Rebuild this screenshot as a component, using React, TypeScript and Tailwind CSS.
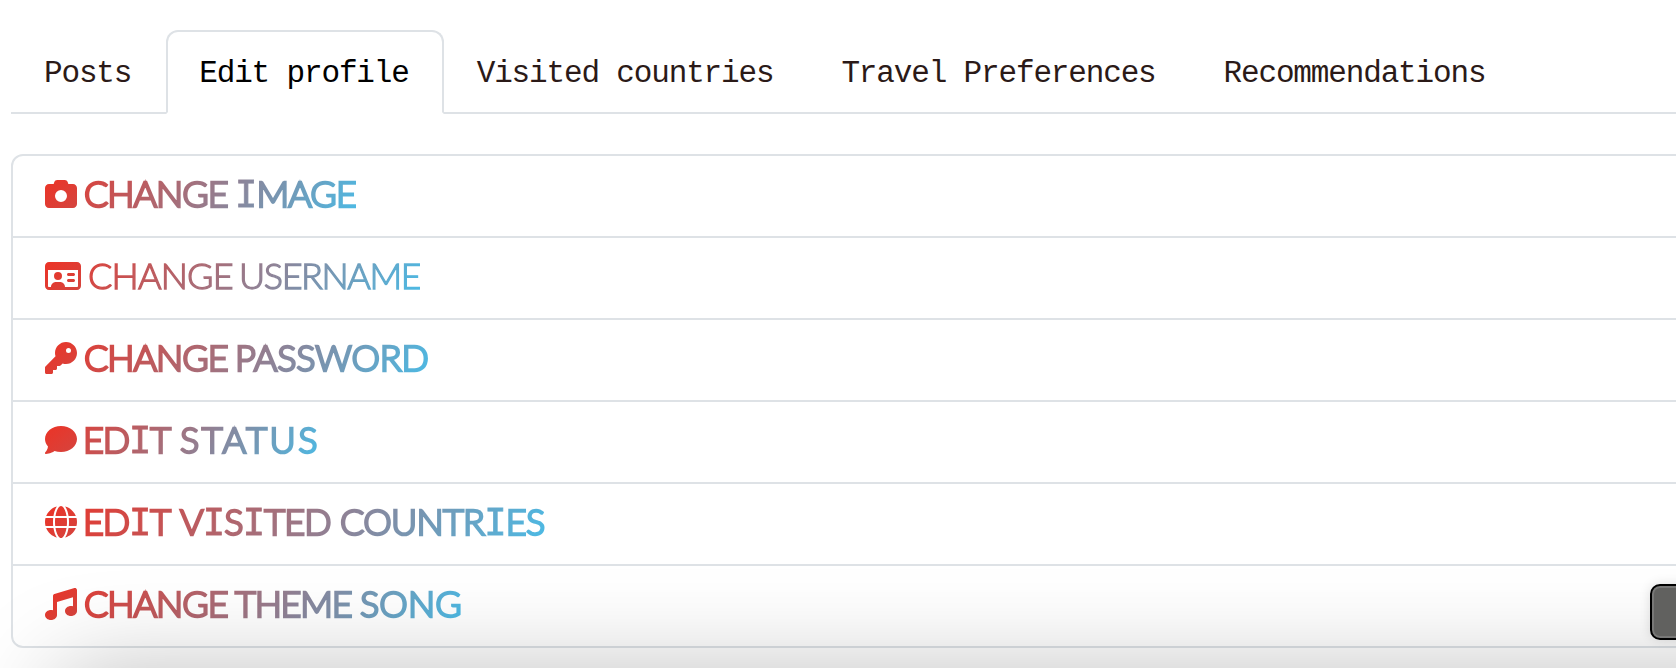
import type { IconType } from "react-icons";
import { FaCamera, FaComment, FaGlobe, FaKey, FaMusic, FaRegIdCard } from "react-icons/fa6";

type Word = { text: string; style: string };
type Item = { icon: IconType; iconStyle: string; thin?: boolean; words: Word[] };

const tabs = ["Posts", "Edit profile", "Visited countries", "Travel Preferences", "Recommendations"];

const change: Word = { text: "CHANGE", style: "w-[151px] tracking-[-1px]" };
const edit: Word = { text: "EDIT", style: "ml-[-1px] w-[97px] tracking-[-1.1px]" };

const items: Item[] = [
  { icon: FaCamera, iconStyle: "w-8", words: [change, { text: "IMAGE", style: "tracking-[-0.9px]" }] },
  {
    icon: FaRegIdCard,
    iconStyle: "w-9",
    thin: true,
    words: [
      { text: "CHANGE", style: "w-[151px] tracking-[-0.8px]" },
      { text: "USERNAME", style: "tracking-[-1.4px]" },
    ],
  },
  { icon: FaKey, iconStyle: "w-8", words: [change, { text: "PASSWORD", style: "tracking-[-0.2px]" }] },
  { icon: FaComment, iconStyle: "w-8", words: [edit, { text: "STATUS", style: "tracking-[2.5px]" }] },
  {
    icon: FaGlobe,
    iconStyle: "w-8",
    words: [
      edit,
      { text: "VISITED", style: "w-[160px] tracking-[-0.8px]" },
      { text: "COUNTRIES", style: "tracking-[-0.7px]" },
    ],
  },
  {
    icon: FaMusic,
    iconStyle: "w-8",
    words: [change, { text: "THEME", style: "w-[125px] tracking-[-1.2px]" }, { text: "SONG", style: "tracking-[0.1px]" }],
  },
];

function WordText({ word }: { word: Word }) {
  return (
    <span className={`shrink-0 pb-[3px] whitespace-nowrap ${word.style}`}>
      {word.text.split(/(I)/).map((part, i) =>
        part === "I" ? (
          <span key={i} className="font-['DejaVu_Sans_Mono',monospace] text-[37px] leading-none font-normal [-webkit-text-stroke:0.8px_transparent]">
            I
          </span>
        ) : (
          part
        ),
      )}
    </span>
  );
}

function Row({ item }: { item: Item }) {
  const Icon = item.icon;
  return (
    <li className="flex h-[82px] items-start border-b-2 border-[#dee2e6] pt-[14px] pl-8 last:h-20 last:border-b-0">
      <h2
        className={`flex h-12 items-center bg-[linear-gradient(120deg,#ee3124,#4bbbe6)] bg-clip-text font-['Lato',sans-serif] text-[36px] leading-[48px] font-light text-transparent ${
          item.thin ? "[-webkit-text-stroke:1.3px_transparent]" : "[-webkit-text-stroke:2.5px_transparent]"
        }`}
      >
        <Icon className={`mr-[7px] h-8 shrink-0 ${item.iconStyle}`} fill="url(#icon-fade)" stroke="none" />
        {item.words.map((word) => (
          <WordText key={word.text} word={word} />
        ))}
      </h2>
    </li>
  );
}

export default function App() {
  return (
    <div className="relative h-[668px] w-full overflow-hidden bg-white pt-[30px] pl-[11px]">
      <svg className="absolute size-0" aria-hidden="true">
        <defs>
          <linearGradient id="icon-fade" x1="0" y1="0" x2="1" y2="1">
            <stop offset="0" stopColor="#ec3326" />
            <stop offset="1" stopColor="#d4453f" />
          </linearGradient>
        </defs>
      </svg>

      <nav className="flex h-[84px] border-b-2 border-[#dee2e6] font-['Liberation_Mono',monospace] text-[31px] tracking-[-1.15px]">
        {tabs.map((tab) => (
          <button
            key={tab}
            className={`h-[84px] shrink-0 rounded-t-xl border-2 pt-1 pr-[33px] pl-[31px] leading-[76px] whitespace-nowrap ${
              tab === "Edit profile" ? "border-[#dee2e6] border-b-white bg-white text-black" : "border-transparent text-[#2b1a18]"
            }`}
          >
            {tab}
          </button>
        ))}
      </nav>

      <ul className="mt-10 w-[1700px] rounded-xl border-2 border-[#dee2e6]">
        {items.map((item, i) => (
          <Row key={i} item={item} />
        ))}
      </ul>

      <div className="absolute top-[674px] left-[60px] h-[200px] w-[1800px] shadow-[0_0_100px_rgba(0,0,0,0.27)]" />
      <div className="absolute top-[584px] left-[1650px] h-14 w-20 rounded-[10px] border-2 border-black bg-[#61615f] shadow-[inset_0_0_0_2px_#787877,0_0_12px_rgba(0,0,0,0.12)]" />
    </div>
  );
}
